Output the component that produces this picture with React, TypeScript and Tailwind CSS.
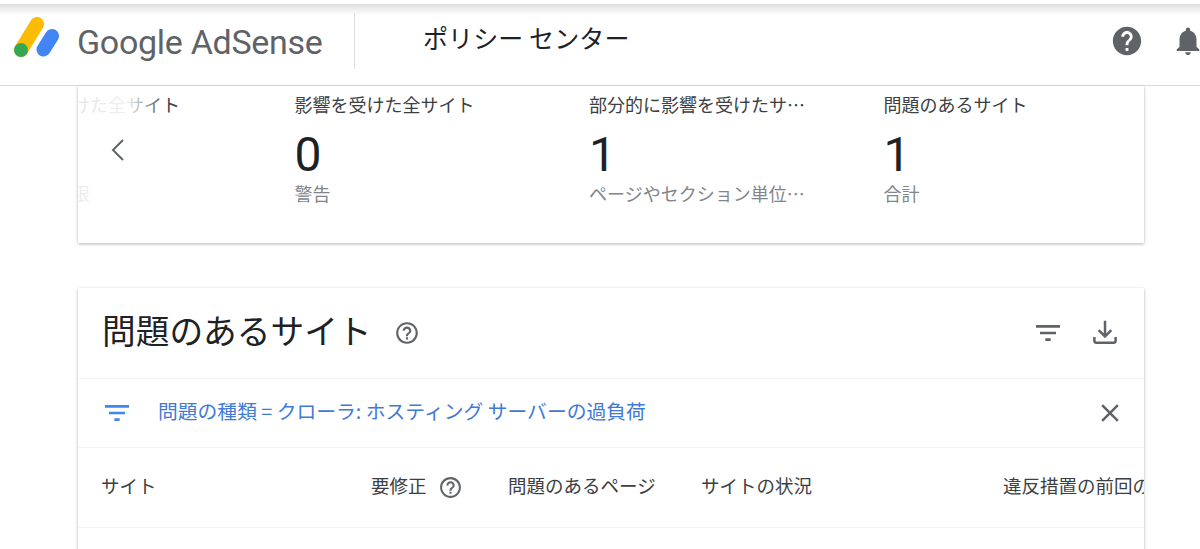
import React from "react";

const jp = "font-['Noto_Sans_CJK_JP','Noto_Sans',sans-serif]";

function Icon({ d, className }: { d: string; className: string }) {
  return (
    <svg viewBox="0 0 24 24" fill="currentColor" className={className}>
      <path d={d} />
    </svg>
  );
}

const helpOutline = "M11 18h2v-2h-2v2zm1-16C6.48 2 2 6.48 2 12s4.48 10 10 10 10-4.48 10-10S17.52 2 12 2zm0 18c-4.41 0-8-3.59-8-8s3.59-8 8-8 8 3.59 8 8-3.59 8-8 8zm0-14c-2.21 0-4 1.79-4 4h2c0-1.1.9-2 2-2s2 .9 2 2c0 2-3 1.75-3 5h2c0-2.25 3-2.5 3-5 0-2.21-1.79-4-4-4z";
const helpFilled = "M12 2C6.48 2 2 6.48 2 12s4.48 10 10 10 10-4.48 10-10S17.52 2 12 2zm1 17h-2v-2h2v2zm2.07-7.75l-.9.92C13.45 12.9 13 13.5 13 15h-2v-.5c0-1.1.45-2.1 1.17-2.83l1.24-1.26c.37-.36.59-.86.59-1.41 0-1.1-.9-2-2-2s-2 .9-2 2H8c0-2.21 1.79-4 4-4s4 1.79 4 4c0 .88-.36 1.68-.93 2.25z";
const bell = "M12 22c1.1 0 2-.9 2-2h-4c0 1.1.89 2 2 2zm6-6v-5c0-3.07-1.64-5.64-4.5-6.32V4c0-.83-.67-1.5-1.5-1.5s-1.5.67-1.5 1.5v.68C7.63 5.36 6 7.92 6 11v5l-2 2v1h16v-1l-2-2z";
const filterList = "M10 18h4v-2h-4v2zM3 6v2h18V6H3zm3 7h12v-2H6v2z";
const close = "M19 6.41L17.59 5 12 10.59 6.41 5 5 6.41 10.59 12 5 17.59 6.41 19 12 13.41 17.59 19 19 17.59 13.41 12z";

function Logo() {
  return (
    <svg viewBox="0 0 48 44" className="w-[48px] h-[44px] shrink-0 -mt-[13px]">
      <line x1="8" y1="34" x2="24" y2="8" stroke="#fbbc04" strokeWidth="14" strokeLinecap="round" />
      <line x1="30.5" y1="33.5" x2="39" y2="20" stroke="#4285f4" strokeWidth="14" strokeLinecap="round" />
      <circle cx="8" cy="34" r="7" fill="#34a853" />
    </svg>
  );
}

function Stat({ label, value, sub }: { label: string; value: string; sub: string }) {
  return (
    <div className="w-[294.5px] shrink-0 pr-[78px]">
      <div className="h-[38px] text-[18px] leading-[38px] text-[#3c4043] whitespace-nowrap overflow-hidden text-ellipsis">{label}</div>
      <div className="h-[54px] mt-[5px] font-['Roboto',sans-serif] text-[48px] leading-[54px] text-[#202124]">{value}</div>
      <div className="-mt-[2px] text-[18px] leading-[26px] text-[#80868b] whitespace-nowrap overflow-hidden text-ellipsis">{sub}</div>
    </div>
  );
}

export default function App() {
  return (
    <div className={`h-[549px] w-[1200px] overflow-hidden bg-white ${jp}`}>
      <div className="h-[86px] pt-[4px] border-b border-[#dadce0] bg-white">
        <div className="h-full flex items-center pl-[13px] overflow-hidden bg-[linear-gradient(to_bottom,#dfdfdf,#ffffff_11px)]">
          <Logo />
          <div className="ml-[16px] -mt-[5px] w-[277px] shrink-0 font-['Roboto',sans-serif] text-[34px] tracking-[-0.3px] text-[#5f6368] whitespace-nowrap">Google AdSense</div>
          <div className="h-[56px] w-px -mt-[8px] bg-[#dadce0] shrink-0" />
          <div className="ml-[68px] -mt-[14px] text-[25px] text-[#202124] tracking-[0.1px] whitespace-nowrap">ポリシー センター</div>
          <div className="ml-auto flex items-center gap-[27px] -mr-[5px] -mt-[8px] text-[#5f6368]">
            <Icon d={helpFilled} className="w-[34px] h-[34px]" />
            <Icon d={bell} className="w-[34px] h-[34px]" />
          </div>
        </div>
      </div>

      <div className="ml-[78px] w-[1066px]">
        <div className="relative h-[157px] bg-white overflow-hidden shadow-[0_1px_3px_rgba(60,64,67,0.4)]">
          <div className="flex -ml-[78px] -mt-[1px]">
            <Stat label="影響を受けた全サイト" value="" sub="配信の制限" />
            <Stat label="影響を受けた全サイト" value="0" sub="警告" />
            <Stat label="部分的に影響を受けたサイト" value="1" sub="ページやセクション単位の問題" />
            <Stat label="問題のあるサイト" value="1" sub="合計" />
          </div>
          <div className="absolute left-0 top-0 bottom-0 w-[90px] bg-[linear-gradient(to_right,rgba(255,255,255,0.85)_0%,rgba(255,255,255,0.92)_55%,rgba(255,255,255,0))] flex items-start">
            <svg viewBox="0 0 24 24" fill="none" stroke="#5f6368" strokeWidth="2" className="ml-[28px] mt-[50px] w-[24px] h-[28px]">
              <path d="M17 2 7 12l10 10" />
            </svg>
          </div>
        </div>

        <div className="mt-[45px] h-[300px] bg-white shadow-[0_1px_3px_rgba(60,64,67,0.4)]">
          <div className="h-[91px] flex items-center pl-[24px] pr-[24px] border-b border-[#f1f3f4]">
            <div className="text-[33.7px] -mt-[6px] leading-none text-[#202124] whitespace-nowrap">問題のあるサイト</div>
            <Icon d={helpOutline} className="ml-[22px] w-[26px] h-[26px] text-[#5f6368]" />
            <Icon d={filterList} className="ml-auto w-[32px] h-[32px] text-[#5f6368]" />
            <svg viewBox="0 0 24 24" fill="none" stroke="#5f6368" strokeWidth="2" className="ml-[26px] -mt-[2px] w-[30px] h-[30px]">
              <path d="M12 3v12M7 10.5l5 5 5-5M3.5 16v3a1.5 1.5 0 0 0 1.5 1.5h14a1.5 1.5 0 0 0 1.5-1.5v-3" />
            </svg>
          </div>
          <div className="h-[69px] flex items-center pl-[23px] pr-[19px] border-b border-[#f1f3f4] text-[#3f7ad6]">
            <Icon d={filterList} className="w-[32px] h-[32px] text-[#4285f4]" />
            <div className="ml-[25px] -mt-[4px] text-[19.8px] whitespace-nowrap">問題の種類 = クローラ: ホスティング サーバーの過負荷</div>
            <Icon d={close} className="ml-auto w-[30px] h-[30px] text-[#5f6368]" />
          </div>
          <div className="h-[80px] flex items-center pl-[23px] border-b border-[#f1f3f4] overflow-hidden text-[18.5px] text-[#3c4043] whitespace-nowrap">
            <div className="w-[270px] shrink-0 -mt-[3px]">サイト</div>
            <div className="w-[137px] shrink-0 flex items-center">
              <span className="-mt-[3px]">要修正</span>
              <Icon d={helpOutline} className="ml-[11px] w-[25px] h-[25px] text-[#5f6368]" />
            </div>
            <div className="w-[193px] shrink-0 -mt-[3px]">問題のあるページ</div>
            <div className="w-[302px] shrink-0 -mt-[3px]">サイトの状況</div>
            <div className="shrink-0 -mt-[3px]">違反措置の前回の</div>
          </div>
        </div>
      </div>
    </div>
  );
}
